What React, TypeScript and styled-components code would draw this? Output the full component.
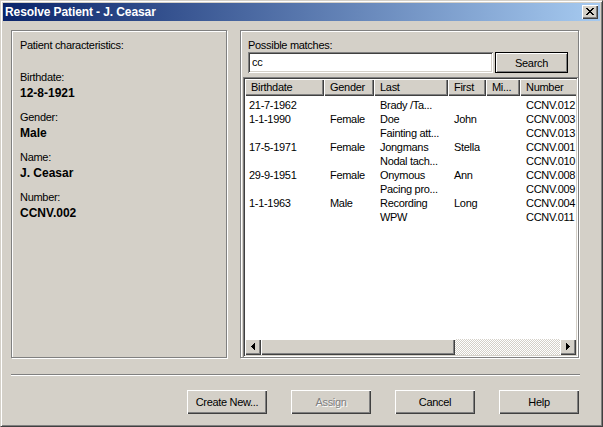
import React from 'react';
import styled, { createGlobalStyle, css } from 'styled-components';

const GlobalStyle = createGlobalStyle`
  html, body {
    margin: 0;
    padding: 0;
    background: #D4D0C8;
  }
  body {
    font-family: "Liberation Sans", Arial, sans-serif;
    font-size: 11px;
    letter-spacing: -0.3px;
    color: #000;
  }
  * { box-sizing: border-box; }
`;

const raised = css`
  box-shadow: inset 1px 1px #fff, inset -1px -1px #404040, inset -2px -2px #808080;
`;

const sunken = css`
  box-shadow: inset 1px 1px #808080, inset -1px -1px #fff, inset 2px 2px #404040, inset -2px -2px #D4D0C8;
`;

const patient = [
  { label: 'Birthdate:', value: '12-8-1921' },
  { label: 'Gender:', value: 'Male' },
  { label: 'Name:', value: 'J. Ceasar' },
  { label: 'Number:', value: 'CCNV.002' },
];

const columns = [
  { title: 'Birthdate', width: 79 },
  { title: 'Gender', width: 50 },
  { title: 'Last', width: 74 },
  { title: 'First', width: 38 },
  { title: 'Mi...', width: 34 },
  { title: 'Number', width: 80 },
];

const matches = [
  ['21-7-1962', '', 'Brady /Ta...', '', '', 'CCNV.012'],
  ['1-1-1990', 'Female', 'Doe', 'John', '', 'CCNV.003'],
  ['', '', 'Fainting att...', '', '', 'CCNV.013'],
  ['17-5-1971', 'Female', 'Jongmans', 'Stella', '', 'CCNV.001'],
  ['', '', 'Nodal tach...', '', '', 'CCNV.010'],
  ['29-9-1951', 'Female', 'Onymous', 'Ann', '', 'CCNV.008'],
  ['', '', 'Pacing pro...', '', '', 'CCNV.009'],
  ['1-1-1963', 'Male', 'Recording', 'Long', '', 'CCNV.004'],
  ['', '', 'WPW', '', '', 'CCNV.011'],
];

const CloseGlyph = () => (
  <svg width="8" height="7" viewBox="0 0 8 7" shapeRendering="crispEdges">
    <path d="M0 0h2v1h1v1h2V1h1V0h2v1H7v1H6v1H5v1h1v1h1v1h1v1H6V6H5V5H3v1H2v1H0V6h1V5h1V4h1V3H2V2H1V1H0z" fill="#000" />
  </svg>
);

const Arrow = ({ dir }: { dir: 'left' | 'right' }) => (
  <svg width="4" height="7" viewBox="0 0 4 7" shapeRendering="crispEdges">
    <path d={dir === 'left' ? 'M0 3.5L4 0V7z' : 'M4 3.5L0 0V7z'} fill="#000" />
  </svg>
);

export default function App() {
  return (
    <>
      <GlobalStyle />
      <S.Window>
        <S.TitleBar>
          <S.Title>Resolve Patient - J. Ceasar</S.Title>
          <S.CloseButton><CloseGlyph /></S.CloseButton>
        </S.TitleBar>

        <S.Body>
          <S.PanelRow>
            <S.InfoPanel>
              <S.Caption>Patient characteristics:</S.Caption>
              <S.Fields>
                {patient.map(f => (
                  <S.Field key={f.label}>
                    <S.FieldLabel>{f.label}</S.FieldLabel>
                    <S.FieldValue>{f.value}</S.FieldValue>
                  </S.Field>
                ))}
              </S.Fields>
            </S.InfoPanel>

            <S.MatchPanel>
              <S.SearchArea>
                <S.Caption>Possible matches:</S.Caption>
                <S.SearchRow>
                  <S.SearchInput readOnly defaultValue="cc" />
                  <S.DefaultButton>Search</S.DefaultButton>
                </S.SearchRow>
              </S.SearchArea>

              <S.ListView>
                <S.Viewport>
                  <S.HeaderRow>
                    {columns.map(c => (
                      <S.HeaderCell key={c.title} $w={c.width}>{c.title}</S.HeaderCell>
                    ))}
                  </S.HeaderRow>
                  <S.Rows>
                    {matches.map(row => (
                      <S.Row key={row[5]}>
                        {row.map((v, i) => (
                          <S.Cell key={i} $w={columns[i].width}>{v}</S.Cell>
                        ))}
                      </S.Row>
                    ))}
                  </S.Rows>
                </S.Viewport>
                <S.ScrollBar>
                  <S.ScrollArrow><Arrow dir="left" /></S.ScrollArrow>
                  <S.Thumb />
                  <S.Track />
                  <S.ScrollArrow><Arrow dir="right" /></S.ScrollArrow>
                </S.ScrollBar>
              </S.ListView>
            </S.MatchPanel>
          </S.PanelRow>

          <S.Separator />

          <S.ButtonRow>
            <S.Button>Create New...</S.Button>
            <S.Button disabled>Assign</S.Button>
            <S.Button>Cancel</S.Button>
            <S.Button>Help</S.Button>
          </S.ButtonRow>
        </S.Body>
      </S.Window>
    </>
  );
}

const S = {
  Window: styled.div`
    width: 603px;
    height: 427px;
    background: #D4D0C8;
    border: 1px solid;
    border-color: #D4D0C8 #404040 #404040 #D4D0C8;
    box-shadow: inset 1px 1px #fff, inset -1px -1px #808080;
    padding: 2px;
    display: flex;
    flex-direction: column;
  `,
  TitleBar: styled.div`
    height: 18px;
    flex: none;
    display: flex;
    align-items: center;
    padding: 0 2px;
    background: linear-gradient(to right, #0A246A, #A6CAF0);
  `,
  Title: styled.div`
    flex: 1;
    color: #fff;
    font-weight: 700;
    font-size: 12px;
    letter-spacing: -0.1px;
    line-height: 18px;
    white-space: nowrap;
  `,
  CloseButton: styled.div`
    width: 16px;
    height: 14px;
    background: #D4D0C8;
    ${raised}
    display: flex;
    align-items: center;
    justify-content: center;
    padding: 0 1px 1px 0;
  `,
  Body: styled.div`
    flex: 1;
    padding: 9px 20px 0 8px;
    display: flex;
    flex-direction: column;
  `,
  PanelRow: styled.div`
    display: flex;
    gap: 13px;
    height: 328px;
  `,
  InfoPanel: styled.section`
    width: 216px;
    height: 328px;
    border: 1px solid #808080;
    box-shadow: inset 1px 1px #fff, 1px 1px #fff;
    padding: 7px 8px;
  `,
  MatchPanel: styled.section`
    width: 339px;
    height: 328px;
    border: 1px solid #808080;
    box-shadow: inset 1px 1px #fff, 1px 1px #fff;
    padding: 7px 0 0 1px;
    display: flex;
    flex-direction: column;
  `,
  Caption: styled.div`
    line-height: 14px;
    white-space: nowrap;
  `,
  Fields: styled.div`
    margin-top: 19px;
    display: flex;
    flex-direction: column;
    gap: 11px;
  `,
  Field: styled.div`
    display: flex;
    flex-direction: column;
  `,
  FieldLabel: styled.div`
    line-height: 13px;
  `,
  FieldValue: styled.div`
    margin-top: 2px;
    line-height: 14px;
    font-size: 12px;
    font-weight: 700;
    letter-spacing: 0;
  `,
  SearchArea: styled.div`
    padding-left: 6px;
  `,
  SearchRow: styled.div`
    display: flex;
    gap: 2px;
  `,
  SearchInput: styled.input`
    width: 245px;
    height: 21px;
    border: none;
    outline: none;
    margin: 0;
    padding: 1px 4px 3px;
    background: #fff;
    ${sunken}
    font: inherit;
    letter-spacing: inherit;
    color: #000;
  `,
  DefaultButton: styled.button`
    width: 73px;
    height: 21px;
    margin: 0;
    padding: 0;
    border: 1px solid #000;
    background: #D4D0C8;
    box-shadow: inset 1px 1px #fff, inset -1px -1px #808080;
    font: inherit;
    letter-spacing: inherit;
    color: #000;
  `,
  ListView: styled.div`
    flex: 1;
    margin: 4px 0 0 1px;
    padding: 2px;
    background: #fff;
    ${sunken}
    display: flex;
    flex-direction: column;
    overflow: hidden;
  `,
  Viewport: styled.div`
    flex: 1;
    overflow: hidden;
  `,
  HeaderRow: styled.div`
    display: flex;
    height: 17px;
  `,
  HeaderCell: styled.div<{ $w: number }>`
    width: ${({ $w }) => $w}px;
    flex: none;
    background: #D4D0C8;
    ${raised}
    padding-left: 6px;
    line-height: 17px;
    white-space: nowrap;
    overflow: hidden;
  `,
  Rows: styled.div`
    padding-top: 2px;
  `,
  Row: styled.div`
    display: flex;
    height: 14px;
    line-height: 14px;
  `,
  Cell: styled.div<{ $w: number }>`
    width: ${({ $w }) => $w}px;
    flex: none;
    padding-left: 6px;
    white-space: nowrap;
    overflow: hidden;
    &:first-child { padding-left: 4px; }
  `,
  ScrollBar: styled.div`
    height: 16px;
    flex: none;
    display: flex;
  `,
  ScrollArrow: styled.div`
    width: 16px;
    height: 16px;
    flex: none;
    background: #D4D0C8;
    ${raised}
    display: flex;
    align-items: center;
    justify-content: center;
    padding: 0 1px 1px 0;
  `,
  Thumb: styled.div`
    width: 194px;
    flex: none;
    background: #D4D0C8;
    ${raised}
  `,
  Track: styled.div`
    flex: 1;
    background: repeating-conic-gradient(#D4D0C8 0 25%, #fff 0 50%) 0 0 / 2px 2px;
  `,
  Separator: styled.div`
    margin-top: 16px;
    height: 2px;
    border-top: 1px solid #808080;
    border-bottom: 1px solid #fff;
  `,
  ButtonRow: styled.div`
    margin-top: 14px;
    display: flex;
    justify-content: flex-end;
    gap: 24px;
    padding-right: 1px;
  `,
  Button: styled.button`
    width: 80px;
    height: 24px;
    margin: 0;
    padding: 0;
    border: none;
    background: #D4D0C8;
    ${raised}
    font: inherit;
    letter-spacing: inherit;
    color: #000;
    &:disabled {
      color: #808080;
      text-shadow: 1px 1px #fff;
    }
  `,
};
